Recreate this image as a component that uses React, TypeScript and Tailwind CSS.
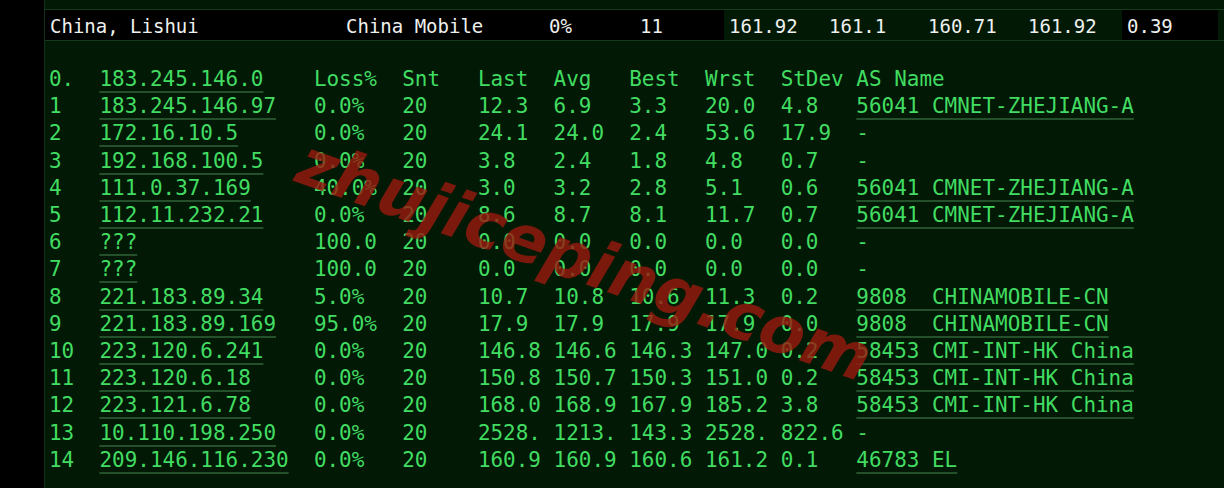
import React from "react";

const hops = [
  ["1", "183.245.146.97", "0.0%", "20", "12.3", "6.9", "3.3", "20.0", "4.8", "56041 CMNET-ZHEJIANG-A"],
  ["2", "172.16.10.5", "0.0%", "20", "24.1", "24.0", "2.4", "53.6", "17.9", "-"],
  ["3", "192.168.100.5", "0.0%", "20", "3.8", "2.4", "1.8", "4.8", "0.7", "-"],
  ["4", "111.0.37.169", "40.0%", "20", "3.0", "3.2", "2.8", "5.1", "0.6", "56041 CMNET-ZHEJIANG-A"],
  ["5", "112.11.232.21", "0.0%", "20", "8.6", "8.7", "8.1", "11.7", "0.7", "56041 CMNET-ZHEJIANG-A"],
  ["6", "???", "100.0", "20", "0.0", "0.0", "0.0", "0.0", "0.0", "-"],
  ["7", "???", "100.0", "20", "0.0", "0.0", "0.0", "0.0", "0.0", "-"],
  ["8", "221.183.89.34", "5.0%", "20", "10.7", "10.8", "10.6", "11.3", "0.2", "9808  CHINAMOBILE-CN"],
  ["9", "221.183.89.169", "95.0%", "20", "17.9", "17.9", "17.9", "17.9", "0.0", "9808  CHINAMOBILE-CN"],
  ["10", "223.120.6.241", "0.0%", "20", "146.8", "146.6", "146.3", "147.0", "0.2", "58453 CMI-INT-HK China"],
  ["11", "223.120.6.18", "0.0%", "20", "150.8", "150.7", "150.3", "151.0", "0.2", "58453 CMI-INT-HK China"],
  ["12", "223.121.6.78", "0.0%", "20", "168.0", "168.9", "167.9", "185.2", "3.8", "58453 CMI-INT-HK China"],
  ["13", "10.110.198.250", "0.0%", "20", "2528.", "1213.", "143.3", "2528.", "822.6", "-"],
  ["14", "209.146.116.230", "0.0%", "20", "160.9", "160.9", "160.6", "161.2", "0.1", "46783 EL"],
];

const ul = "underline decoration-[#24502b] decoration-2 underline-offset-[5px]";

const TopCell = ({ w, dark, children }: { w: string; dark?: boolean; children?: React.ReactNode }) => (
  <div className={`${w} ${dark ? "bg-black" : "bg-[#011905]"} h-full pl-[5px] pt-[3px] flex items-center whitespace-pre overflow-hidden`}>
    {children}
  </div>
);

export default function App() {
  return (
    <div className="w-[1224px] h-[488px] bg-black flex overflow-hidden font-['DejaVu_Sans_Mono',monospace]">
      <div className="w-[44px] shrink-0 bg-black" />
      <div className="flex-1 flex flex-col border-l border-[#12301a]">
        <div className="h-[10px] bg-[#011905] border-b border-[#163a1c]" />
        <div className="h-[31px] flex text-[19px] text-[#eef0ee] border-b border-[#163a1c]">
          <TopCell w="w-[296px]" dark>China, Lishui</TopCell>
          <TopCell w="w-[203px]" dark>China Mobile</TopCell>
          <TopCell w="w-[91px]" dark>0%</TopCell>
          <TopCell w="w-[89px]" dark>11</TopCell>
          <TopCell w="w-[100px]">161.92</TopCell>
          <TopCell w="w-[99px]">161.1</TopCell>
          <TopCell w="w-[100px]">160.71</TopCell>
          <TopCell w="w-[99px]">161.92</TopCell>
          <TopCell w="w-[96px]" dark>0.39</TopCell>
          <TopCell w="flex-1">
            <span className="text-[#3fdc5f] text-[10px]">:</span>
          </TopCell>
        </div>
        <div className="relative flex-1 bg-[#011905] pt-[25px] pl-[4px] text-[20.96px] leading-[27.2px] text-[#42dc62] overflow-hidden">
          <div className="grid grid-cols-[4ch_17ch_7ch_6ch_6ch_6ch_6ch_6ch_6ch_1fr] whitespace-pre">
            <span>0.</span>
            <span><span className={ul}>183.245.146.0</span></span>
            <span>Loss%</span>
            <span>Snt</span>
            <span>Last</span>
            <span>Avg</span>
            <span>Best</span>
            <span>Wrst</span>
            <span>StDev</span>
            <span>AS Name</span>
            {hops.map((h) => (
              <React.Fragment key={h[0]}>
                <span>{h[0]}</span>
                <span><span className={ul}>{h[1]}</span></span>
                <span>{h[2]}</span>
                <span>{h[3]}</span>
                <span>{h[4]}</span>
                <span>{h[5]}</span>
                <span>{h[6]}</span>
                <span>{h[7]}</span>
                <span>{h[8]}</span>
                <span>{h[9] === "-" ? "-" : <span className={ul}>{h[9]}</span>}</span>
              </React.Fragment>
            ))}
          </div>
          <div className="absolute left-[255px] top-[86px] rotate-[19.5deg] origin-left text-[66px] leading-none font-bold italic font-['DejaVu_Sans',sans-serif] text-[#9a1a10] opacity-80 whitespace-pre pointer-events-none">
            zhujiceping.com
          </div>
        </div>
      </div>
    </div>
  );
}
